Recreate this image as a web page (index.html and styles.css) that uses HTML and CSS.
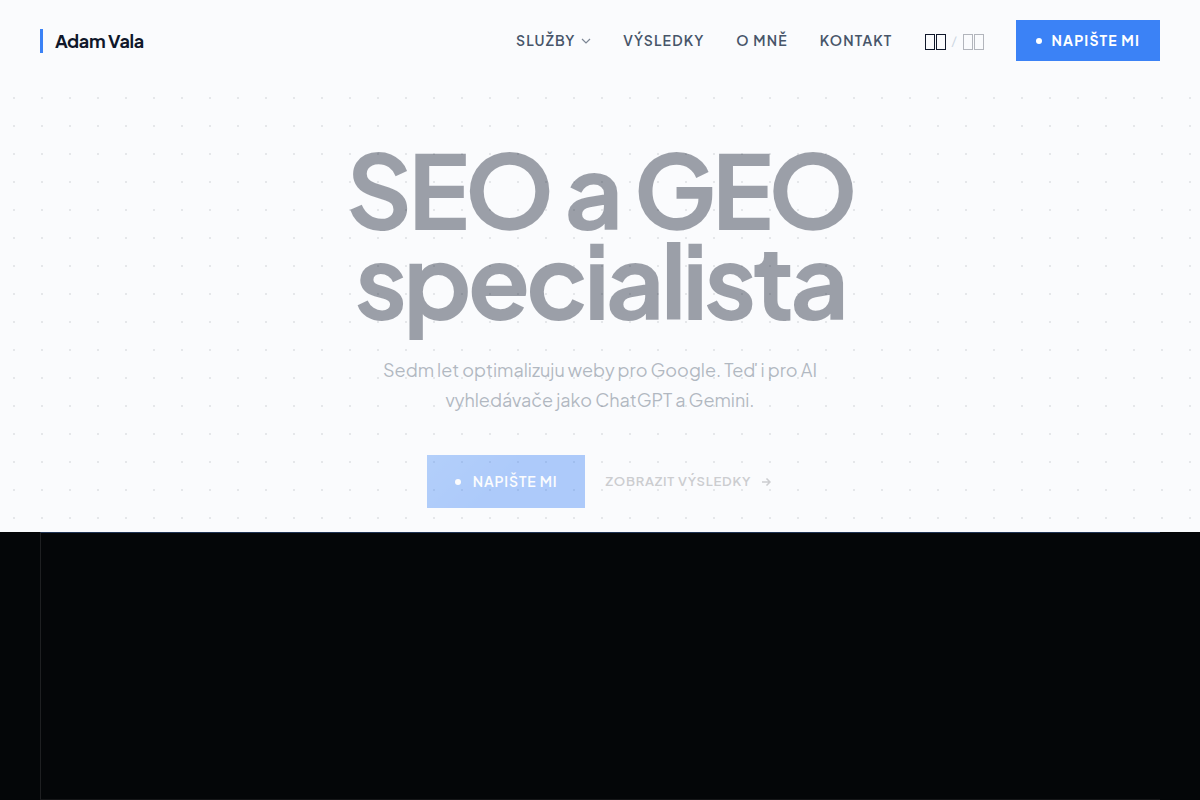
FILE: index.html
```html
<!DOCTYPE html>
<html lang="cs">
<head>
    <meta charset="UTF-8">
    <meta name="viewport" content="width=device-width, initial-scale=1.0">
    <title>Adam Vala</title>
    <link rel="stylesheet" href="styles.css">
</head>
<body>
    <header class="header">
        <a href="#" class="logo">Adam Vala</a>

        <nav class="nav">
            <a href="#sluzby" class="nav-link">
                Služby
                <svg class="chevron" width="10" height="6" viewBox="0 0 10 6" fill="none" stroke="currentColor" stroke-width="1.2">
                    <path d="M1 1l4 4 4-4"/>
                </svg>
            </a>
            <a href="#vysledky" class="nav-link">Výsledky</a>
            <a href="#o-mne" class="nav-link">O mně</a>
            <a href="#kontakt" class="nav-link">Kontakt</a>
            <div class="lang">
                <a href="#cs" class="lang-link" aria-label="Čeština"><span></span><span></span></a>
                <span class="lang-sep">/</span>
                <a href="#en" class="lang-link lang-off" aria-label="English"><span></span><span></span></a>
            </div>
            <a href="#kontakt" class="btn">Napište mi</a>
        </nav>
    </header>

    <main>
        <section class="hero">
            <h1>SEO a GEO<br>specialista</h1>
            <p class="lead">Sedm let optimalizuju weby pro Google. Teď i pro AI<br>vyhledávače jako ChatGPT a Gemini.</p>
            <div class="actions">
                <a href="#kontakt" class="btn btn-large">Napište mi</a>
                <a href="#vysledky" class="more">
                    Zobrazit výsledky
                    <svg width="10" height="8" viewBox="0 0 10 8" fill="none" stroke="currentColor" stroke-width="1.5">
                        <path d="M1 4h8M5.500 .5l3.500 3.500-3.500 3.500"/>
                    </svg>
                </a>
            </div>
        </section>

        <section class="stats">
            <div class="stats-grid"></div>
        </section>
    </main>
</body>
</html>
```

FILE: styles.css
```css
* {
    box-sizing: border-box;
}

body {
    margin: 0;
    min-height: 100vh;
    display: flex;
    flex-direction: column;
    font-family: "Plus Jakarta Sans", Inter, "Liberation Sans", sans-serif;
    color: #0f172a;
    background-color: #fafbfd;
    background-image: radial-gradient(circle, #e5e7ea 1px, transparent 1px);
    background-size: 28px 28px;
}

a {
    color: inherit;
    text-decoration: none;
}

.header {
    display: flex;
    justify-content: space-between;
    align-items: center;
    padding: 20px 40px;
    background: #fafbfd;
}

.logo {
    border-left: 3px solid #3b82f6;
    padding-left: 12px;
    font-size: 18px;
    line-height: 24px;
    font-weight: 700;
    letter-spacing: -0.02em;
}

.nav {
    display: flex;
    align-items: center;
    gap: 32px;
}

.nav-link {
    display: flex;
    align-items: center;
    gap: 6px;
    color: #475569;
    font-size: 14px;
    line-height: 21px;
    font-weight: 600;
    letter-spacing: 0.08em;
    text-transform: uppercase;
}

.chevron {
    opacity: 0.7;
}

.lang {
    display: flex;
    align-items: center;
    gap: 5px;
}

.lang-link {
    display: flex;
    gap: 1px;
    padding: 2px 0 0 1px;
}

.lang-link span {
    width: 10px;
    height: 16px;
    border: 1px solid #0f172a;
}

.lang-sep {
    font-size: 12px;
    color: #cbd5e1;
}

.lang-off {
    opacity: 0.3;
}

.btn {
    display: flex;
    align-items: center;
    gap: 10px;
    padding: 0 20px;
    background: #3b82f6;
    color: #fff;
    font-size: 14px;
    line-height: 41px;
    font-weight: 700;
    letter-spacing: 0.08em;
    text-transform: uppercase;
}

.btn::before {
    content: "";
    width: 6px;
    height: 6px;
    border-radius: 50%;
    background: #fff;
}

.hero {
    display: flex;
    flex-direction: column;
    align-items: center;
    padding: 63px 40px 24px;
    text-align: center;
}

h1 {
    margin: 0 0 31px;
    font-size: 102px;
    line-height: 90px;
    font-weight: 700;
    letter-spacing: -0.04em;
    opacity: 0.4;
}

.lead {
    margin: 0 0 40px;
    color: #475569;
    font-size: 18px;
    line-height: 30px;
    font-weight: 400;
    opacity: 0.4;
}

.actions {
    display: flex;
    align-items: center;
    gap: 20px;
}

.btn-large {
    gap: 12px;
    padding: 0 28px;
    background: linear-gradient(135deg, #4b8ff7, #3b82f6 50%);
    line-height: 53px;
    font-weight: 600;
    letter-spacing: 0.06em;
    opacity: 0.4;
}

.more {
    display: flex;
    align-items: center;
    gap: 10px;
    padding-right: 2px;
    font-size: 13px;
    line-height: 21px;
    font-weight: 600;
    letter-spacing: 0.06em;
    text-transform: uppercase;
    color: #cccdd0;
}

main {
    flex: 1;
    display: flex;
    flex-direction: column;
}

.stats {
    flex: 1;
    display: flex;
    padding: 0 40px;
    background: #040608;
}

.stats-grid {
    flex: 1;
    border-left: 1px solid #1e1f21;
    border-top: 1px solid #1f3354;
    border-bottom: 1px solid #151618;
}
```
